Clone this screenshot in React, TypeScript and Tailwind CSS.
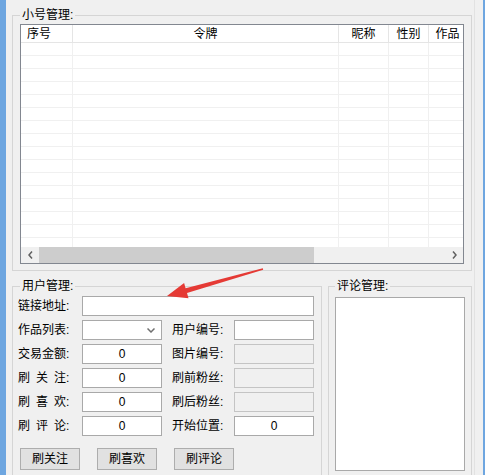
import React from 'react';

const columns = [
  { title: '序号', width: 'w-[52px]', align: 'justify-start pl-[6px]' },
  { title: '令牌', width: 'w-[266px]', align: 'justify-center' },
  { title: '昵称', width: 'w-[50px]', align: 'justify-center' },
  { title: '性别', width: 'w-[40px]', align: 'justify-center' },
  { title: '作品', width: 'w-[38px]', align: 'justify-center' },
];

const rows = Array.from({ length: 16 }, (_, i) => i);

function Label({ chars, spaced = false, className = '' }: { chars: string[]; spaced?: boolean; className?: string }) {
  return (
    <div className={`flex items-center ${className}`}>
      <span className={`flex w-[48px] ${spaced ? 'justify-between' : ''}`}>
        {chars.map((c, i) => (
          <span key={i}>{c}</span>
        ))}
      </span>
      <span>:</span>
    </div>
  );
}

function TextBox({ value = '', disabled = false, className = 'w-[80px]' }: { value?: string; disabled?: boolean; className?: string }) {
  return (
    <div
      className={`h-[20px] flex items-center justify-center border ${
        disabled ? 'bg-[#f0f0f0] border-[#c4c4c4]' : 'bg-white border-[#a9a9a9]'
      } ${className}`}
    >
      {value}
    </div>
  );
}

function ListView() {
  return (
    <div className="w-[444px] h-[240px] border border-[#828790] bg-white flex flex-col overflow-hidden">
      <div className="flex h-[18px] border-b border-[#e5e5e5] shrink-0">
        {columns.map((col) => (
          <div key={col.title} className={`${col.width} shrink-0 flex items-center ${col.align} border-r border-[#e5e5e5]`}>
            {col.title}
          </div>
        ))}
      </div>
      <div className="h-[204px] overflow-hidden">
        {rows.map((r) => (
          <div key={r} className="flex h-[13px] border-b border-[#f0f0f0]">
            {columns.map((col) => (
              <div key={col.title} className={`${col.width} shrink-0 border-r border-[#f0f0f0]`} />
            ))}
          </div>
        ))}
      </div>
      <div className="flex h-[16px] bg-[#f0f0f0] shrink-0">
        <div className="w-[18px] flex items-center justify-center">
          <svg width="5" height="8" viewBox="0 0 5 8">
            <polyline points="4,0.5 1,4 4,7.5" fill="none" stroke="#606060" strokeWidth="1.5" />
          </svg>
        </div>
        <div className="w-[275px] bg-[#cdcdcd]" />
        <div className="flex-1" />
        <div className="w-[17px] flex items-center justify-center">
          <svg width="5" height="8" viewBox="0 0 5 8">
            <polyline points="1,0.5 4,4 1,7.5" fill="none" stroke="#606060" strokeWidth="1.5" />
          </svg>
        </div>
      </div>
    </div>
  );
}

const formRows = [
  { left: ['交', '易', '金', '额'], leftSpaced: false, right: ['图', '片', '编', '号'], leftValue: '0', rightValue: '', rightDisabled: true },
  { left: ['刷', '关', '注'], leftSpaced: true, right: ['刷', '前', '粉', '丝'], leftValue: '0', rightValue: '', rightDisabled: true },
  { left: ['刷', '喜', '欢'], leftSpaced: true, right: ['刷', '后', '粉', '丝'], leftValue: '0', rightValue: '', rightDisabled: true },
  { left: ['刷', '评', '论'], leftSpaced: true, right: ['开', '始', '位', '置'], leftValue: '0', rightValue: '0', rightDisabled: false },
];

export default function App() {
  return (
    <div className="relative w-[485px] h-[475px] overflow-hidden flex bg-[#f0f0f0] text-[12px] leading-[14px] text-black font-['Liberation_Sans','Noto_Sans_CJK_SC',sans-serif]">
      <div className="w-[6px] bg-[#6ea6e0] shrink-0" />
      <div className="flex-1 pt-[8px] pl-[6px] flex flex-col">
        <fieldset className="w-[460px] border border-[#d5d5d5] px-[7px] pb-[6px]">
          <legend className="px-[2px] leading-[14px]">小号管理:</legend>
          <div className="mt-[2px]">
            <ListView />
          </div>
        </fieldset>

        <div className="flex gap-[6px] mt-[8px]">
          <fieldset className="w-[310px] h-[220px] border border-[#d5d5d5] pl-[5px]">
            <legend className="ml-[2px] px-[2px] leading-[14px]">用户管理:</legend>
            <div className="mt-[3px] flex flex-col gap-[4px]">
              <div className="flex items-center">
                <Label chars={['链', '接', '地', '址']} className="w-[64px]" />
                <TextBox className="w-[232px]" />
              </div>
              <div className="flex items-center">
                <Label chars={['作', '品', '列', '表']} className="w-[64px]" />
                <div className="w-[80px] h-[20px] bg-white border border-[#a9a9a9] flex items-center justify-end pr-[6px]">
                  <svg width="8" height="5" viewBox="0 0 8 5">
                    <polyline points="0.5,0.5 4,4 7.5,0.5" fill="none" stroke="#707070" strokeWidth="1.5" />
                  </svg>
                </div>
                <Label chars={['用', '户', '编', '号']} className="w-[62px] ml-[10px]" />
                <TextBox />
              </div>
              {formRows.map((row, i) => (
                <div key={i} className="flex items-center">
                  <Label chars={row.left} spaced={row.leftSpaced} className="w-[64px]" />
                  <TextBox value={row.leftValue} />
                  <Label chars={row.right} className="w-[62px] ml-[10px]" />
                  <TextBox value={row.rightValue} disabled={row.rightDisabled} />
                </div>
              ))}
            </div>
            <div className="flex gap-[17px] mt-[12px] ml-[2px]">
              {['刷关注', '刷喜欢', '刷评论'].map((t) => (
                <button key={t} className="w-[60px] h-[22px] bg-[#e1e1e1] border border-[#adadad] flex items-center justify-center">
                  {t}
                </button>
              ))}
            </div>
          </fieldset>

          <fieldset className="w-[144px] h-[220px] border border-[#d5d5d5] px-[6px]">
            <legend className="px-[2px] leading-[14px]">评论管理:</legend>
            <div className="mt-[4px] w-[130px] h-[174px] bg-white border border-[#a9a9a9]" />
          </fieldset>
        </div>
      </div>
      <div className="w-[9px] shrink-0 border-l border-[#e2e2e2]" />
      <div className="w-[2px] bg-[#6ea6e0] shrink-0" />

      <svg className="absolute inset-0 pointer-events-none" width="485" height="475" viewBox="0 0 485 475">
        <polygon
          points="167,296 188.5,298.3 187,293 263.2,269.8 262.8,268.2 185.6,288.2 184.1,282.9"
          fill="#e53a35"
        />
      </svg>
    </div>
  );
}
